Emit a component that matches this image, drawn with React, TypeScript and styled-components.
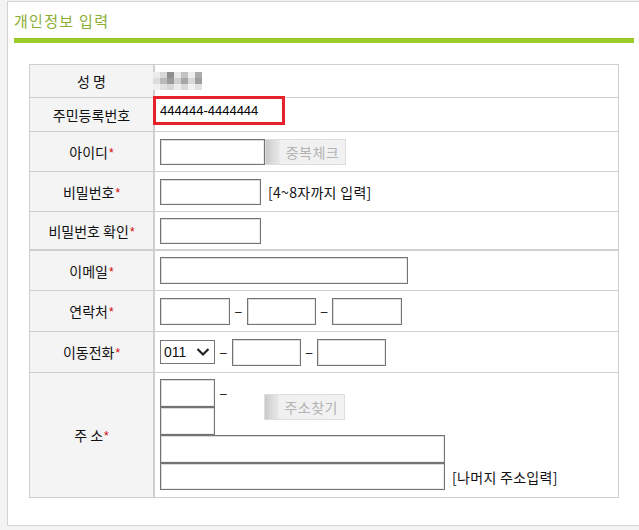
import React from 'react';
import styled, { createGlobalStyle } from 'styled-components';

const Global = createGlobalStyle`
  html, body { margin: 0; padding: 0; background: #f3f3f3; }
  body {
    font-family: "Noto Sans CJK KR", "Noto Sans", sans-serif;
    font-size: 13px;
    color: #111;
    overflow: hidden;
  }
  * { box-sizing: border-box; }
`;

const Panel = styled.div`
  margin: 1px 0 0 7px;
  width: 640px;
  height: 525px;
  background: #fff;
  border: 1px solid #d3d3d3;
  border-right: none;
`;

const Header = styled.div`
  height: 36px;
  padding-left: 6px;
  display: flex;
  align-items: center;
`;

const Title = styled.h2`
  margin: 0;
  font-size: 15px;
  font-weight: normal;
  color: #8aae33;
  letter-spacing: 1.3px;
`;

const Bar = styled.div`
  margin-left: 6px;
  width: 620px;
  height: 5px;
  background: #9fce2c;
  border-top: 1px solid #93c026;
`;

const Table = styled.div`
  margin: 21px 0 0 21px;
  width: 590px;
  border: 1px solid #cfcfcf;
`;

const Row = styled.div<{ $h: number; $thick?: boolean; $last?: boolean }>`
  position: relative;
  display: grid;
  grid-template-columns: 125px 1fr;
  box-sizing: content-box;
  height: ${(p) => p.$h}px;
  border-bottom: ${(p) => (p.$last ? 'none' : p.$thick ? '2px solid #cfcfcf' : '1px solid #cfcfcf')};
`;

const Label = styled.div`
  background: #f4f4f4;
  border-right: 2px solid #cfcfcf;
  display: flex;
  align-items: center;
  justify-content: center;
  font-size: 14px;
  color: #111;
  white-space: pre;
`;

const Star = styled.span`
  color: #d40000;
  font-family: "Liberation Sans", sans-serif;
  font-size: 12px;
  position: relative;
  top: 1px;
  margin-left: 1px;
`;

const Field = styled.div<{ $top?: boolean }>`
  display: flex;
  align-items: ${(p) => (p.$top ? 'flex-start' : 'center')};
  flex-direction: ${(p) => (p.$top ? 'column' : 'row')};
  padding-left: 5px;
  padding-top: ${(p) => (p.$top ? '6px' : '0')};
`;

const Input = styled.input<{ $w: number; $h?: number }>`
  width: ${(p) => p.$w}px;
  height: ${(p) => p.$h ?? 26}px;
  margin: 0;
  padding: 0 3px;
  border: 1px solid #747474;
  box-shadow: inset 1px 1px 0 #dadada, inset -1px -1px 0 #ececec;
  background: #fff;
  font-family: "Liberation Sans", sans-serif;
  font-size: 13px;
  outline: none;
`;

const Dash = styled.span`
  font-family: "Liberation Sans", sans-serif;
  font-size: 12px;
  margin: 0 5px;
  color: #111;
  position: relative;
  top: 1px;
`;

const Note = styled.span`
  margin-left: 7px;
  font-size: 14px;
  letter-spacing: 0.3px;
  color: #111;
`;

const ImgButton = styled.button`
  width: 81px;
  height: 26px;
  padding: 0 0 0 14px;
  margin: 0;
  border: 1px solid #dedede;
  background: linear-gradient(to right, #c9c9c9 0px, #dcdcdc 7px, #e6e6e6 13px, #f0f0f0 14px, #f2f2f2 100%);
  color: #b3b3b3;
  font-family: "Noto Sans CJK KR", sans-serif;
  font-size: 14px;
  letter-spacing: 0.5px;
  text-align: center;
  cursor: pointer;
`;

const Mosaic = styled.div`
  display: grid;
  grid-template-columns: repeat(7, 7px);
  grid-template-rows: repeat(3, 6px);
  margin-left: -7px;
  margin-top: -1px;
`;

const Cell = styled.div<{ $c: string }>`
  background: ${(p) => p.$c};
`;

const Highlight = styled.div`
  position: absolute;
  left: 123px;
  top: -2px;
  width: 132px;
  height: 29px;
  border: 3px solid #e8222b;
  pointer-events: none;
`;

const IdNumber = styled.span`
  font-family: "Liberation Sans", sans-serif;
  font-size: 13px;
  color: #000;
  position: relative;
  top: -4px;
`;

const SelectWrap = styled.div`
  position: relative;
  width: 55px;
  height: 24px;
`;

const Select = styled.select`
  appearance: none;
  -webkit-appearance: none;
  width: 55px;
  height: 24px;
  margin: 0;
  padding: 0 0 0 3px;
  border: 1px solid #767676;
  border-radius: 0;
  background: #fff;
  color: #111;
  font-family: "Liberation Sans", sans-serif;
  font-size: 14px;
  outline: none;
`;

const Chevron = styled.svg`
  position: absolute;
  right: 5px;
  top: 7px;
  pointer-events: none;
`;

const ZipBlock = styled.div`
  display: flex;
  align-items: flex-start;
`;

const ZipCol = styled.div`
  display: flex;
  flex-direction: column;
`;

const ZipLine = styled.div`
  display: flex;
  align-items: center;
`;

const ZipButton = styled(ImgButton)`
  margin: 15px 0 0 32px;
`;

const AddrLine = styled.div`
  display: flex;
  align-items: center;
`;

const mosaic = [
  ['#ebebeb', '#d8d8d8', '#8f8f8f', '#e9e9e9', '#c3c3c3', '#efefef', '#acacac'],
  ['#dcdcdc', '#b9b9b9', '#9b9b9b', '#d0d0d0', '#a7a7a7', '#d9d9d9', '#9f9f9f'],
  ['#f0f0f0', '#e1e1e1', '#d6d6d6', '#ededed', '#d9d9d9', '#f1f1f1', '#e1e1e1'],
];

const Req: React.FC<{ text: string }> = ({ text }) => (
  <Label>
    {text}
    <Star>*</Star>
  </Label>
);

export default function App() {
  return (
    <>
      <Global />
      <Panel>
        <Header>
          <Title>개인정보 입력</Title>
        </Header>
        <Bar />
        <Table>
          <Row $h={32}>
            <Label>성 명</Label>
            <Field>
              <Mosaic>
                {mosaic.flat().map((c, i) => (
                  <Cell key={i} $c={c} />
                ))}
              </Mosaic>
            </Field>
          </Row>
          <Row $h={33}>
            <Label>주민등록번호</Label>
            <Field>
              <IdNumber>444444-4444444</IdNumber>
            </Field>
            <Highlight />
          </Row>
          <Row $h={39}>
            <Req text="아이디" />
            <Field>
              <Input $w={105} />
              <ImgButton type="button">중복체크</ImgButton>
            </Field>
          </Row>
          <Row $h={39}>
            <Req text="비밀번호" />
            <Field>
              <Input $w={101} type="password" />
              <Note>[4~8자까지 입력]</Note>
            </Field>
          </Row>
          <Row $h={37} $thick>
            <Req text="비밀번호 확인" />
            <Field>
              <Input $w={101} type="password" />
            </Field>
          </Row>
          <Row $h={39}>
            <Req text="이메일" />
            <Field>
              <Input $w={248} $h={27} />
            </Field>
          </Row>
          <Row $h={40}>
            <Req text="연락처" />
            <Field>
              <Input $w={70} $h={27} />
              <Dash>–</Dash>
              <Input $w={69} $h={27} />
              <Dash>–</Dash>
              <Input $w={70} $h={27} />
            </Field>
          </Row>
          <Row $h={40}>
            <Req text="이동전화" />
            <Field>
              <SelectWrap>
                <Select defaultValue="011">
                  <option value="010">010</option>
                  <option value="011">011</option>
                  <option value="016">016</option>
                  <option value="017">017</option>
                  <option value="019">019</option>
                </Select>
                <Chevron width="14" height="10" viewBox="0 0 14 10">
                  <path d="M1.5 2 L7 7.5 L12.5 2" fill="none" stroke="#222" strokeWidth="2.2" />
                </Chevron>
              </SelectWrap>
              <Dash>–</Dash>
              <Input $w={69} $h={27} />
              <Dash>–</Dash>
              <Input $w={69} $h={27} />
            </Field>
          </Row>
          <Row $h={124} $last>
            <Req text="주 소" />
            <Field $top>
              <ZipBlock>
                <ZipCol>
                  <ZipLine>
                    <Input $w={55} $h={28} />
                    <Dash>–</Dash>
                  </ZipLine>
                  <Input $w={55} $h={28} />
                </ZipCol>
                <ZipButton type="button">주소찾기</ZipButton>
              </ZipBlock>
              <Input $w={285} $h={28} />
              <AddrLine>
                <Input $w={285} $h={27} />
                <Note>[나머지 주소입력]</Note>
              </AddrLine>
            </Field>
          </Row>
        </Table>
      </Panel>
    </>
  );
}
